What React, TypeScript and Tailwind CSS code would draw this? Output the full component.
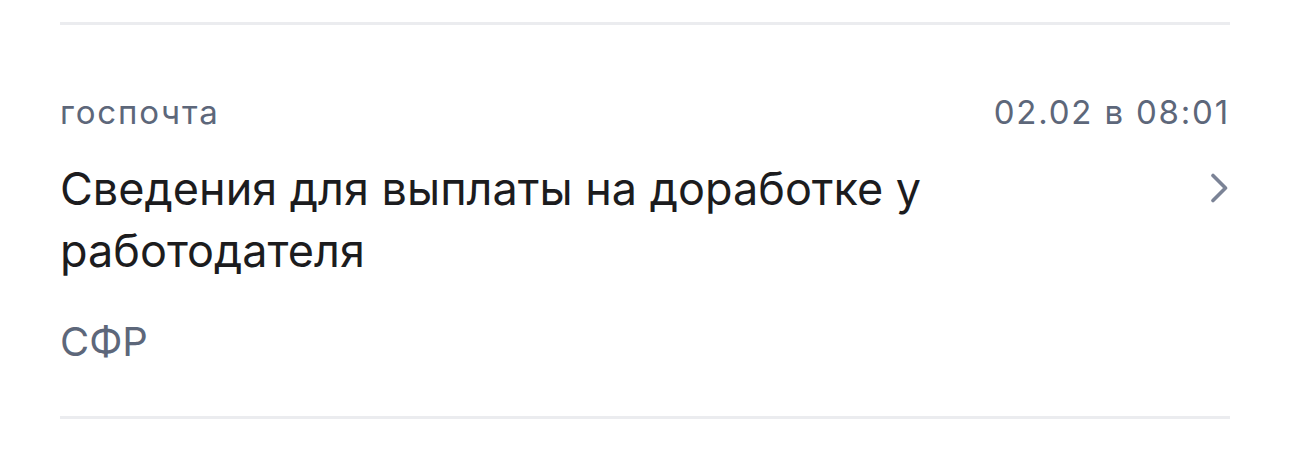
import React from 'react';

const font = { fontFamily: 'Inter, "Noto Sans", sans-serif' };

const ChevronRight: React.FC = () => (
  <svg width="18" height="30" viewBox="0 0 18 30" fill="none" className="shrink-0">
    <path d="M3 2.5 L15.5 15 L3 27.5" stroke="#7b8396" strokeWidth="3.6" strokeLinecap="round" strokeLinejoin="round" />
  </svg>
);

const App: React.FC = () => {
  return (
    <div className="w-[1290px] h-[476px] bg-white px-[60px] pt-[22px]" style={font}>
      <div className="h-[3px] bg-[#ebecef]" />

      {/* notification row */}
      <div className="pt-[67px] pb-[50px]">
        <div className="flex items-center justify-between text-[33px] leading-[40px] tracking-[0.055em] text-[#5d677a]">
          <span>госпочта</span>
          <span>02.02 в 08:01</span>
        </div>
        <div className="flex items-start justify-between mt-[26px]">
          <p className="text-[45px] leading-[62px] text-[#1c1c1e] max-w-[900px]">
            Сведения для выплаты на доработке у работодателя
          </p>
          <div className="pt-[15px] pr-[2px]">
            <ChevronRight />
          </div>
        </div>
        <div className="mt-[36px] text-[40px] leading-[48px] text-[#5d677a]">СФР</div>
      </div>

      <div className="h-[3px] bg-[#ebecef]" />
    </div>
  );
};

export default App;
